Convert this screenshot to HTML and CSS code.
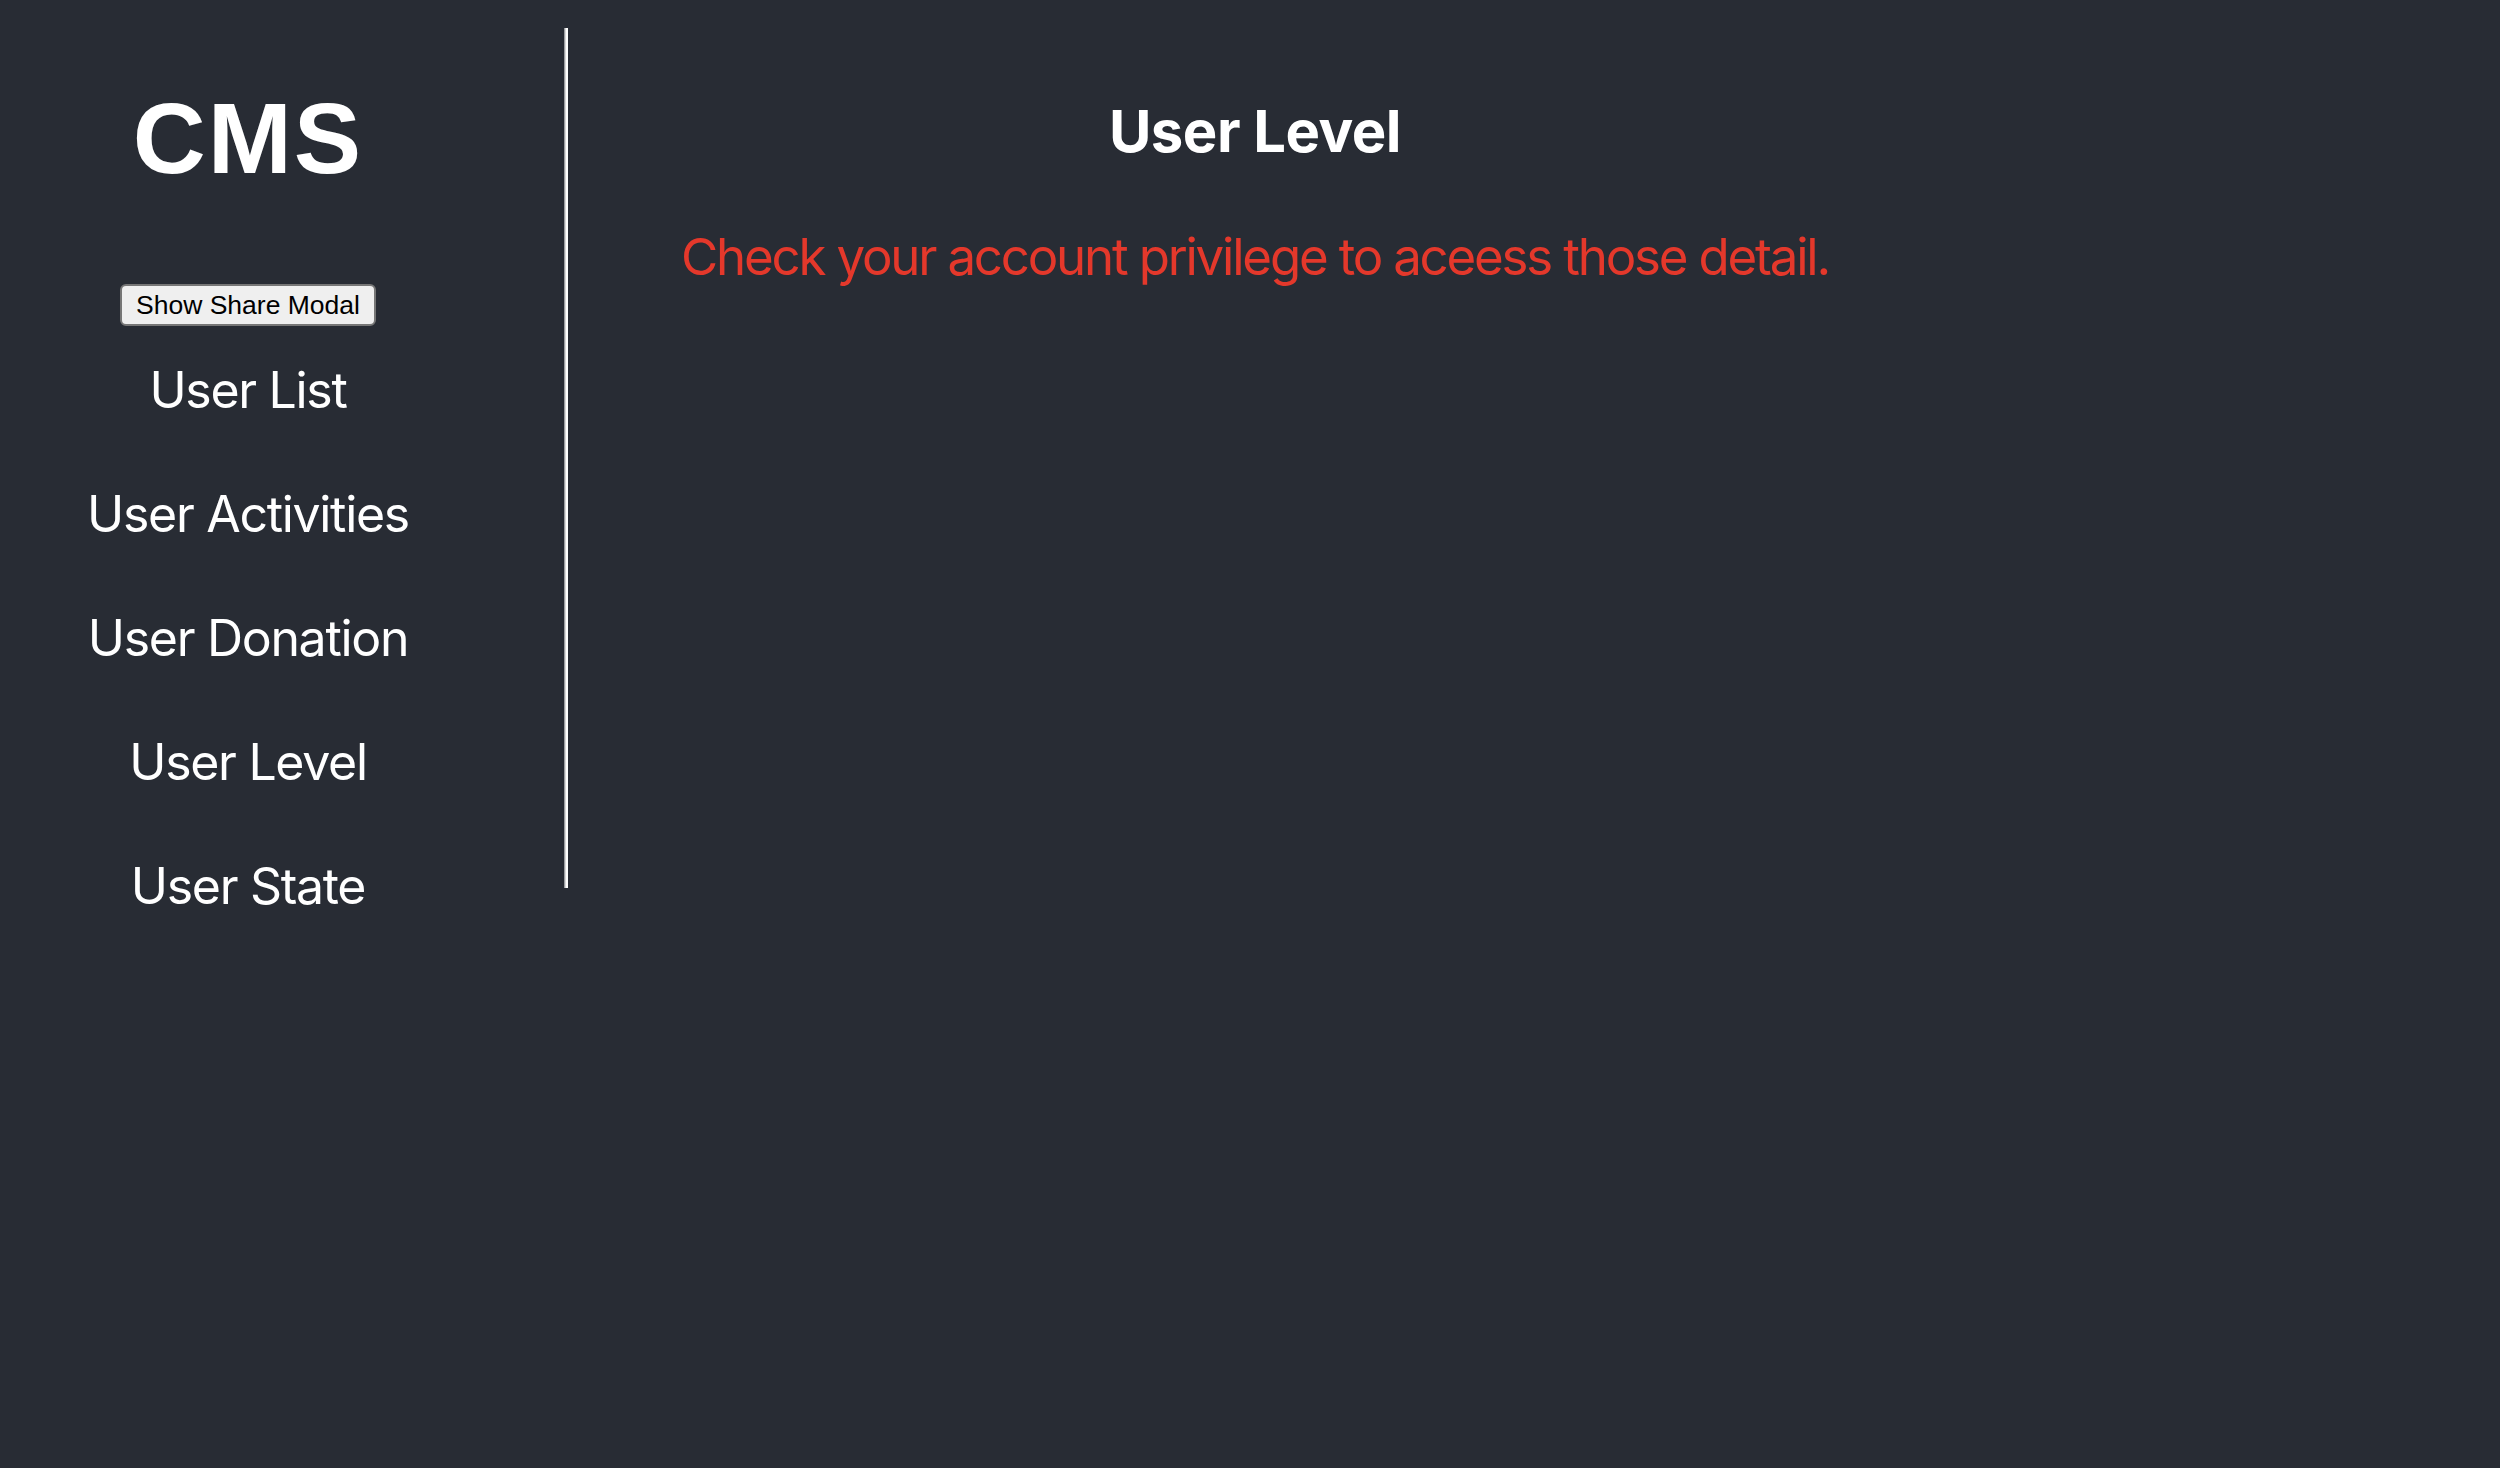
FILE: index.html
```html
<!DOCTYPE html>
<html lang="en">
<head>
<meta charset="utf-8">
<title>CMS</title>
<link rel="stylesheet" href="styles.css">
</head>
<body>
<div class="app">
  <aside class="sidebar">
    <h1 class="logo">CMS</h1>
    <button class="share-btn" type="button">Show Share Modal</button>
    <nav class="nav">
      <a class="nav-link" href="#">User List</a>
      <a class="nav-link" href="#">User Activities</a>
      <a class="nav-link" href="#">User Donation</a>
      <a class="nav-link" href="#">User Level</a>
      <a class="nav-link" href="#">User State</a>
    </nav>
  </aside>
  <div class="divider"></div>
  <main class="main">
    <h2 class="title">User Level</h2>
    <p class="error">Check your account privilege to aceess those detail.</p>
  </main>
</div>
</body>
</html>
```
FILE: styles.css
```css
html, body {
  margin: 0;
  padding: 0;
}
body {
  background: #282c34;
  color: #ffffff;
  min-height: 100vh;
  font-family: Inter, "Noto Sans", sans-serif;
}
.app {
  display: flex;
  align-items: flex-start;
}
.sidebar {
  width: 496px;
  display: flex;
  flex-direction: column;
  align-items: center;
  padding-top: 83px;
}
.logo {
  margin: 0;
  font-family: "Liberation Sans", Arial, sans-serif;
  font-weight: 700;
  font-size: 101px;
  line-height: 110px;
  letter-spacing: 2px;
  color: #ffffff;
}
.share-btn {
  margin-top: 91px;
  font-family: "Liberation Sans", Arial, sans-serif;
  font-size: 26.5px;
  line-height: 30px;
  color: #000000;
  background: #efefef;
  border: 2px solid #767676;
  border-radius: 6px;
  padding: 4px 14px;
  height: 42px;
  box-sizing: border-box;
  display: flex;
  align-items: center;
}
.nav {
  margin-top: 34px;
  display: flex;
  flex-direction: column;
  align-items: center;
}
.nav-link {
  display: block;
  font-size: 50px;
  line-height: 60px;
  height: 124px;
  letter-spacing: -1.3px;
  color: #ffffff;
  text-decoration: none;
}
.divider {
  margin-left: 68px;
  margin-top: 28px;
  width: 4px;
  height: 860px;
  background: linear-gradient(to right, #9a9ca0 0, #9a9ca0 1px, #d8d8d8 1px, #d8d8d8 2px, #ffffff 2px);
}
.main {
  width: 1374px;
  text-align: center;
  padding-top: 96px;
}
.title {
  margin: 0;
  font-weight: 700;
  font-size: 58px;
  line-height: 70px;
  letter-spacing: -0.5px;
}
.error {
  margin: 61px 0 0;
  font-size: 51px;
  line-height: 60px;
  letter-spacing: -2.2px;
  color: #e4382b;
}
```
